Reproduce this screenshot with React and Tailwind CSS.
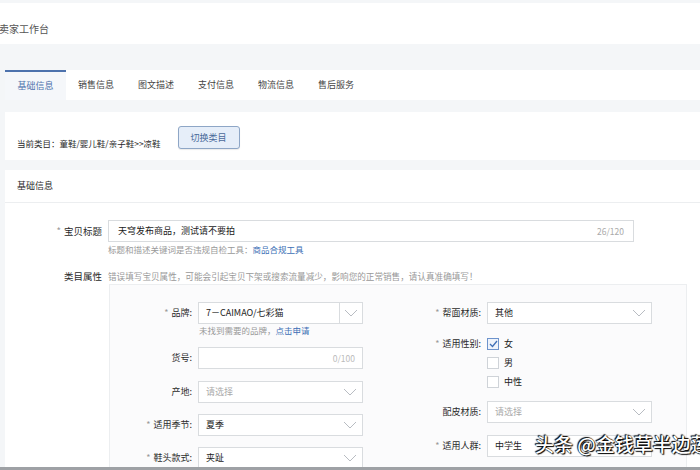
import React from "react";

const font = { fontFamily: '"Noto Sans CJK SC", "Noto Sans", sans-serif' };

const Chevron = () => (
  <svg width="14" height="8" viewBox="0 0 14 8" fill="none">
    <path d="M1 1l6 6 6-6" stroke="#b8bcc2" strokeWidth="1" />
  </svg>
);

const Select = ({ value, placeholder, split = false }) => (
  <div className="w-[165px] h-[22px] border border-[#d9dcdf] bg-white flex items-center">
    <span className={`flex-1 pl-[7px] text-[9px] ${value ? "text-[#222]" : "text-[#aaa]"}`}>
      {value || placeholder}
    </span>
    <span
      className={`h-full w-[22px] flex items-center justify-center mr-[1px] ${
        split ? "border-l border-[#d9dcdf]" : ""
      }`}
    >
      <Chevron />
    </span>
  </div>
);

const Label = ({ text, req, w = "w-[88px]" }) => (
  <div className={`${w} shrink-0 text-right text-[9px] text-[#2a2a2a] pr-[6px]`}>
    {req && <span className="text-[#999] mr-[3px]">*</span>}
    {text}:
  </div>
);

const Check = ({ checked, text }) => (
  <div className="flex items-center h-[19px]">
    <span
      className={`w-[12px] h-[12px] border flex items-center justify-center ${
        checked ? "border-[#6d93cc] bg-[#eef3fb]" : "border-[#cfd3d8] bg-white"
      }`}
    >
      {checked && (
        <svg width="9" height="8" viewBox="0 0 9 8" fill="none">
          <path d="M1 4l2.5 2.5L8 1" stroke="#3f6fb6" strokeWidth="1.3" />
        </svg>
      )}
    </span>
    <span className="ml-[5px] text-[9px] text-[#222]">{text}</span>
  </div>
);

export default function App() {
  const tabs = ["基础信息", "销售信息", "图文描述", "支付信息", "物流信息", "售后服务"];

  return (
    <div className="w-[700px] h-[470px] overflow-hidden bg-[#f4f6f8] flex flex-col relative" style={font}>
      {/* header */}
      <div className="shrink-0 mt-[3px] h-[41px] bg-white flex items-center">
        <span className="text-[10px] text-[#555] -ml-[1px] mt-[9px]">卖家工作台</span>
      </div>

      {/* tabs */}
      <div className="shrink-0 mt-[26px] ml-[5px] h-[30px] bg-white flex">
        {tabs.map((t, i) => (
          <div
            key={t}
            className={`flex items-center justify-center text-[9px] ${
              i === 0
                ? "border-t-2 border-[#4d72ad] bg-[#f5f7fa] text-[#4d72ad] w-[61px]"
                : "text-[#444] w-[60px]"
            }`}
          >
            {t}
          </div>
        ))}
      </div>

      {/* category */}
      <div className="shrink-0 mt-[12px] ml-[5px] h-[48px] bg-white flex items-start">
        <span className="ml-[12px] mt-[25px] text-[8.5px] leading-[12px] text-[#2a2a2a]">
          当前类目：童鞋/婴儿鞋/亲子鞋&gt;&gt;凉鞋
        </span>
        <button className="ml-[17px] mt-[14px] w-[62px] h-[23px] rounded-[3px] border border-[#8ea6c6] bg-[#e6eef9] text-[9px] text-[#4a6a9a] shadow-[0_1px_1px_rgba(0,0,0,0.08)]">
          切换类目
        </button>
      </div>

      {/* basic info */}
      <div className="mt-[10px] ml-[5px] flex-1 min-h-0 bg-white flex flex-col">
        <div className="shrink-0 h-[33px] flex items-center border-b border-[#eceef0]">
          <span className="ml-[12px] text-[9px] text-[#2a2a2a]">基础信息</span>
        </div>

        <div className="shrink-0 flex mt-[17px]">
          <div className="w-[103px] shrink-0 text-right pr-[6px] text-[9.5px] text-[#2a2a2a] leading-[22px]">
            <span className="text-[#999] mr-[3px]">*</span>宝贝标题
          </div>
          <div className="flex flex-col">
            <div className="w-[526px] h-[22px] border border-[#d9dcdf] flex items-center justify-between px-[9px]">
              <span className="text-[9px] text-[#1a1a1a]">天穹发布商品，测试请不要拍</span>
              <span className="text-[8.5px] text-[#aaa]">26/120</span>
            </div>
            <div className="mt-[1px] text-[8.5px] leading-[12px] text-[#999]">
              标题和描述关键词是否违规自检工具：<span className="text-[#3d6fb5]">商品合规工具</span>
            </div>
          </div>
        </div>

        <div className="shrink-0 flex mt-[14px]">
          <div className="w-[103px] shrink-0 text-right pr-[6px] text-[9.5px] text-[#2a2a2a] leading-[14px]">类目属性</div>
          <div className="text-[8.6px] text-[#999] leading-[14px]">
            错误填写宝贝属性，可能会引起宝贝下架或搜索流量减少，影响您的正常销售，请认真准确填写！
          </div>
        </div>

        <div className="ml-[104px] mt-[1px] w-[578px] flex-1 border border-[#eceef0] bg-[#fbfbfc] flex pt-[17px]">
          {/* left column */}
          <div className="w-[291px] shrink-0 flex flex-col">
            <div className="flex items-center">
              <Label text="品牌" req />
              <Select value="7－CAIMAO/七彩猫" split />
            </div>
            <div className="ml-[89px] text-[8.5px] text-[#999] leading-[12px]">
              未找到需要的品牌，<span className="text-[#3d6fb5]">点击申请</span>
            </div>
            <div className="flex items-center mt-[11px]">
              <Label text="货号" />
              <div className="w-[165px] h-[22px] border border-[#d9dcdf] bg-white flex items-center justify-end pr-[7px] text-[8.5px] text-[#bbb]">
                0/100
              </div>
            </div>
            <div className="flex items-center mt-[12px]">
              <Label text="产地" />
              <Select placeholder="请选择" />
            </div>
            <div className="flex items-center mt-[11px]">
              <Label text="适用季节" req />
              <Select value="夏季" />
            </div>
            <div className="flex items-center mt-[11px]">
              <Label text="鞋头款式" req />
              <Select value="夹趾" />
            </div>
          </div>

          {/* right column */}
          <div className="flex flex-col">
            <div className="flex items-center">
              <Label text="帮面材质" req w="w-[86px]" />
              <Select value="其他" />
            </div>
            <div className="flex mt-[10px]">
              <div className="w-[86px] pr-[6px] text-right text-[9px] text-[#2a2a2a] leading-[19px]">
                <span className="text-[#999] mr-[3px]">*</span>适用性别:
              </div>
              <div className="flex flex-col">
                <Check checked text="女" />
                <Check text="男" />
                <Check text="中性" />
              </div>
            </div>
            <div className="flex items-center mt-[10px]">
              <Label text="配皮材质" w="w-[86px]" />
              <Select placeholder="请选择" />
            </div>
            <div className="flex items-center mt-[12px]">
              <Label text="适用人群" req w="w-[86px]" />
              <div className="w-[165px] h-[22px] border border-[#d9dcdf] bg-white flex items-center pl-[7px] text-[9px] text-[#222]">
                中学生
              </div>
            </div>
          </div>
        </div>
      </div>

      <div className="shrink-0 h-[3px] bg-[#9ea1a5]" />

      {/* watermark */}
      <div
        className="absolute left-[535px] top-[430px] text-[19px] font-medium text-white whitespace-nowrap"
        style={{ textShadow: "0 0 1px #000, 1px 1px 1px #000, -1px -1px 1px #000" }}
      >
        头条 @金钱草半边莲
      </div>
    </div>
  );
}
